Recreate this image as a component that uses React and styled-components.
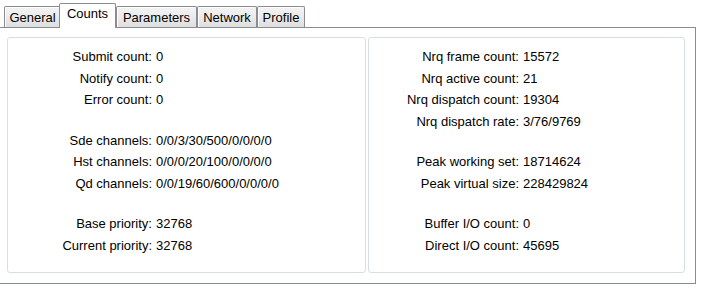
import React from "react";
import styled, { createGlobalStyle } from "styled-components";

const GlobalStyle = createGlobalStyle`
  html, body { margin: 0; padding: 0; background: #ffffff; }
  body { font-family: "Liberation Sans", Arial, sans-serif; font-size: 13px; color: #000; }
`;

const Window = styled.div`
  width: 701px;
  height: 288px;
  background: #ffffff;
  overflow: hidden;
`;

const TabStrip = styled.div`
  display: flex;
  align-items: flex-end;
  height: 27px;
  padding-left: 4px;
  box-sizing: border-box;
  position: relative;
  z-index: 1;
`;

const Tab = styled.div`
  box-sizing: border-box;
  flex: 0 0 auto;
  width: ${(p) => p.$width}px;
  height: ${(p) => (p.$active ? "25px" : "21px")};
  margin: 0 0 ${(p) => (p.$active ? "-1px" : "0")} ${(p) => (p.$active ? "-2px" : "0")};
  border: 1px solid #898c95;
  border-bottom: none;
  border-radius: 2px 2px 0 0;
  background: ${(p) =>
    p.$active ? "#ffffff" : "linear-gradient(#f3f3f3, #ebebeb 50%, #dedede)"};
  box-shadow: ${(p) => (p.$active ? "none" : "inset 1px 1px 0 #ffffff")};
  display: flex;
  justify-content: center;
  align-items: ${(p) => (p.$active ? "flex-start" : "center")};
  padding-top: ${(p) => (p.$active ? "2px" : "0")};
  font-size: 13px;
  line-height: 15px;
  color: #000;
  position: relative;
  z-index: ${(p) => (p.$active ? 2 : 1)};
  white-space: nowrap;
`;

const Panel = styled.div`
  box-sizing: border-box;
  width: 696px;
  height: 257px;
  border: 1px solid #898c95;
  border-left: none;
  background: #ffffff;
  padding: 9px 10px 10px 7px;
  display: flex;
  gap: 2px;
`;

const Group = styled.div`
  box-sizing: border-box;
  width: ${(p) => p.$width || "auto"};
  flex: ${(p) => (p.$width ? "0 0 auto" : "1 1 auto")};
  border: 1px solid #d5dfe5;
  border-radius: 3px;
  padding-top: 8px;
  display: flex;
  flex-direction: column;
  gap: 19px;
`;

const Section = styled.div`
  display: grid;
  grid-template-columns: ${(p) => p.$label}px 1fr;
  column-gap: 4px;
  grid-auto-rows: 21.5px;
  align-items: center;
`;

const Label = styled.div`
  text-align: right;
  white-space: nowrap;
`;

const Value = styled.div`
  white-space: nowrap;
`;

const left = [
  [
    ["Submit count:", "0"],
    ["Notify count:", "0"],
    ["Error count:", "0"],
  ],
  [
    ["Sde channels:", "0/0/3/30/500/0/0/0/0"],
    ["Hst channels:", "0/0/0/20/100/0/0/0/0"],
    ["Qd channels:", "0/0/19/60/600/0/0/0/0"],
  ],
  [
    ["Base priority:", "32768"],
    ["Current priority:", "32768"],
  ],
];

const right = [
  [
    ["Nrq frame count:", "15572"],
    ["Nrq active count:", "21"],
    ["Nrq dispatch count:", "19304"],
    ["Nrq dispatch rate:", "3/76/9769"],
  ],
  [
    ["Peak working set:", "18714624"],
    ["Peak virtual size:", "228429824"],
  ],
  [
    ["Buffer I/O count:", "0"],
    ["Direct I/O count:", "45695"],
  ],
];

const tabs = [
  { name: "General", width: 57 },
  { name: "Counts", width: 57, active: true },
  { name: "Parameters", width: 81 },
  { name: "Network", width: 60 },
  { name: "Profile", width: 48 },
];

function Column({ sections, labelWidth, width }) {
  return (
    <Group $width={width}>
      {sections.map((rows, i) => (
        <Section key={i} $label={labelWidth}>
          {rows.map(([l, v]) => (
            <React.Fragment key={l}>
              <Label>{l}</Label>
              <Value>{v}</Value>
            </React.Fragment>
          ))}
        </Section>
      ))}
    </Group>
  );
}

export default function App() {
  return (
    <Window>
      <GlobalStyle />
      <TabStrip>
        {tabs.map((t) => (
          <Tab key={t.name} $active={t.active} $width={t.width}>
            {t.name}
          </Tab>
        ))}
      </TabStrip>
      <Panel>
        <Column sections={left} labelWidth={144} width="359px" />
        <Column sections={right} labelWidth={150} />
      </Panel>
    </Window>
  );
}
